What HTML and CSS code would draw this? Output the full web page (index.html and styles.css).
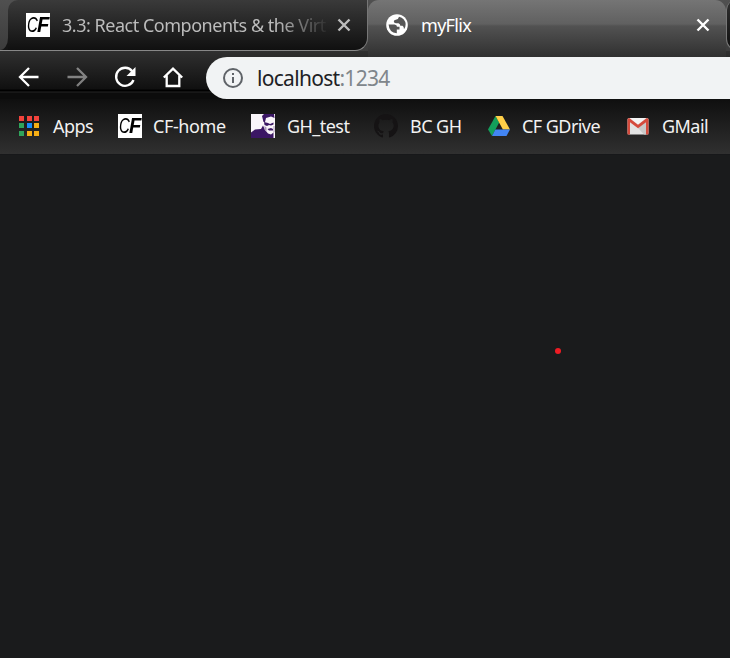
FILE: index.html
```html
<!DOCTYPE html>
<html lang="en">
<head>
<meta charset="utf-8">
<title>myFlix</title>
<link rel="stylesheet" href="styles.css">
</head>
<body>
<header class="browser">
  <div class="tabs">
    <div class="tab tab-prev"></div>
    <div class="tab tab-idle">
      <span class="cf"><i>C</i><b>F</b></span>
      <span class="tab-title faded">3.3: React Components &amp; the Virt</span>
      <svg class="close" viewBox="0 0 14 14"><path d="M1.500 1.500l11 11M12.500 1.500l-11 11"/></svg>
    </div>
    <div class="tab tab-active">
      <svg class="globe" viewBox="0 0 22 22"><circle cx="11" cy="11" r="10.800" fill="#fff"/><path fill="#565656" d="M2.600 10.500H8.500Q11 10.800 11 12.800H13.500V15.500H10.800V19.300Q3.200 18.800 2.600 10.500ZM13 2.800Q12.500 5.600 9.800 5.800Q7.800 6 7.800 7.800Q8 9.200 10 9.300H12.500Q14.300 9.800 14.300 11.800H16.500Q18 12.500 18 15.300Q21.500 10 17.800 5.500Q16 3.300 13 2.800Z"/></svg>
      <span class="tab-title">myFlix</span>
      <svg class="close" viewBox="0 0 14 14"><path d="M1.500 1.500l11 11M12.500 1.500l-11 11"/></svg>
    </div>
    <div class="tab tab-next"></div>
  </div>
  <nav class="toolbar">
    <svg class="nav" viewBox="0 0 24 24"><path d="M21.500 12H3M12 3L3 12l9 9"/></svg>
    <svg class="nav dim" viewBox="0 0 24 24"><path d="M2.500 12H21M12 3l9 9-9 9"/></svg>
    <svg class="nav" viewBox="0 0 24 24"><path d="M19.200 6.200A9 9 0 1 0 20.500 15"/><path class="solid" d="M22.500 2v9h-9z"/></svg>
    <svg class="nav" viewBox="0 0 24 24"><path d="M2.800 12.500L12 3.700l9.200 8.800M5.700 10.500V21h12.600V10.500"/></svg>
    <div class="address">
      <svg class="info" viewBox="0 0 20 20"><circle cx="10" cy="10" r="9"/><path d="M10 9v6M10 5v2"/></svg>
      <span class="url">localhost<span class="port">:1234</span></span>
    </div>
  </nav>
  <nav class="bookmarks">
    <a class="mark m-apps"><span class="apps"><i class="r"></i><i class="r"></i><i class="r"></i><i class="g"></i><i class="b"></i><i class="y"></i><i class="g"></i><i class="y"></i><i class="y"></i></span><span class="label">Apps</span></a>
    <a class="mark m-home"><span class="cf"><i>C</i><b>F</b></span><span class="label">CF-home</span></a>
    <a class="mark m-test"><svg viewBox="0 0 24 24"><path fill="#faf6fa" d="M0 0h24v24H0z"/><path fill="#3b1764" d="M11 2L13 0H23L23.500 4L20 2.500L15 4L14 8H12.500ZM13 8L17 9L19 10L22.500 8.500V10.500L20 11.500L18 11L16 12L13.500 11ZM0 24V18.500L4 15.500L10 15L12 11.500L14 16L17 19.500L20 20.500L22.500 18.500V24ZM16.500 15L20 14L22 15V16.500L18 16.500Z"/><path fill="#a995b7" d="M13.500 12l2 1.500v4.500l-2-2.500zM22.500 12h1v6l-1 1z"/></svg><span class="label">GH_test</span></a>
    <a class="mark m-bc"><svg viewBox="0 0 16 16"><path fill="#151314" d="M8 0C3.580 0 0 3.580 0 8c0 3.540 2.290 6.530 5.470 7.590.4.070.55-.17.55-.38 0-.19-.01-.82-.01-1.490-2.010.37-2.530-.49-2.690-.94-.09-.23-.48-.94-.82-1.130-.28-.15-.68-.52-.01-.53.63-.01 1.080.58 1.230.82.72 1.210 1.870.87 2.330.66.07-.52.28-.87.51-1.070-1.780-.2-3.640-.89-3.640-3.950 0-.87.31-1.590.82-2.150-.08-.2-.36-1.020.08-2.120 0 0 .67-.21 2.200.82.64-.18 1.320-.27 2-.27s1.360.09 2 .27c1.530-1.040 2.200-.82 2.200-.82.44 1.100.16 1.920.08 2.120.51.56.82 1.270.82 2.150 0 3.070-1.870 3.750-3.650 3.950.29.25.54.73.54 1.480 0 1.070-.01 1.930-.01 2.200 0 .21.15.46.55.38A8.010 8.010 0 0 0 16 8c0-4.420-3.580-8-8-8z"/></svg><span class="label">BC GH</span></a>
    <a class="mark m-drive"><svg viewBox="0 0 24 24"><path fill="#139f5b" d="M8.500 2L12.200 8.600L5 22L1 15.500Z"/><path fill="#ffcf48" d="M8.500 2H15.500L23 15.500H15.900Z"/><path fill="#4285f4" d="M8.400 15.500H23L19.500 22H5Z"/></svg><span class="label">CF GDrive</span></a>
    <a class="mark m-mail"><svg viewBox="0 0 24 24"><rect x="1.500" y="4" width="21" height="16.500" rx="1.500" fill="#e3e3e3"/><path fill="#f4f4f4" d="M4 4h16l-8 7z"/><path fill="#c9c9c9" d="M12 14l8-7v13.500h-2z"/><path fill="#d54b3d" d="M1.500 5.500Q1.500 4 3.200 4L12 10.700L20.800 4Q22.500 4 22.500 5.500V20.500H20V8.300L12 14.300L4 8.300V20.500H1.500Z"/></svg><span class="label">GMail</span></a>
  </nav>
</header>
<main class="page"><span class="pointer"></span></main>
</body>
</html>
```
FILE: styles.css
```css
* { box-sizing: border-box; }
body {
  margin: 0;
  width: 730px;
  height: 658px;
  overflow: hidden;
  background: #1b1c1d;
  color: #f2f2f2;
  font: 18px/24px "Noto Sans", "Open Sans", sans-serif;
}
svg { display: block; flex: none; }
.browser { height: 154px; background: #303030; }
.tabs {
  display: flex;
  height: 51px;
  background:
    linear-gradient(#141414, #141414) 0 36px / 18px 14px no-repeat,
    linear-gradient(#888, #888) 0 50px / 18px 1px no-repeat,
    linear-gradient(#505050, #3c3c3c);
}
.tab { display: flex; align-items: center; height: 51px; flex: none; }
.tab-prev {
  width: 8px;
  height: 50px;
  border-radius: 0 0 8px 0 / 0 0 12px 0;
  background: linear-gradient(#505050, #3c3c3c);
}
.tab-idle {
  width: 360px;
  padding: 0 16px 1px 18px;
  border-right: 1.500px solid #777;
  border-bottom: 1.500px solid #888;
  border-radius: 10px 0 13px 0;
  background: linear-gradient(#3a3a3a, #101010);
  color: #bcbcbc;
}
.tab-active {
  width: 358px;
  height: 57px;
  margin-bottom: -6px;
  padding: 0 16px 7px 18px;
  border-radius: 11px 11px 0 0;
  background: linear-gradient(#757575, #606060 24px, #525252 26px, #303030);
  color: #fff;
}
.tab-next {
  width: 20px;
  border-left: 1px solid #777;
  border-bottom: 1px solid #888;
  border-radius: 10px 0 0 12px;
  background: linear-gradient(#303030, #101010);
}
.tab-title { white-space: nowrap; letter-spacing: -.7px; }
.faded {
  width: 264px;
  margin: 0 10px 0 12px;
  overflow: hidden;
  letter-spacing: -.48px;
  -webkit-mask-image: linear-gradient(90deg, #000 215px, transparent 268px);
  mask-image: linear-gradient(90deg, #000 215px, transparent 268px);
}
.close { width: 14px; height: 14px; margin-left: auto; }
.close path { fill: none; stroke: currentColor; stroke-width: 2.4; }
.globe { width: 22px; height: 22px; margin-right: 13px; }
.cf {
  display: flex;
  flex: none;
  width: 24px;
  height: 24px;
  padding-left: 1px;
  background: #fff;
  color: #000;
  font: 22px/24px "Liberation Sans", sans-serif;
}
.cf i { width: 10px; transform: scaleX(.68); transform-origin: left; }
.cf b { font-style: italic; transform: scaleX(.92); transform-origin: left; }
.toolbar {
  display: flex;
  align-items: center;
  height: 48px;
  padding: 6px 0 0 17px;
  background: linear-gradient(#303030, #101010 38px, #000 39px, #000 40px, #242424 41px, #0c0c0c 42px, #0c0c0c);
}
.nav { width: 24px; height: 24px; margin: -2px 24px 0 0; }
.nav path { fill: none; stroke: #fff; stroke-width: 2.3; }
.nav .solid { fill: #fff; stroke: none; }
.dim { opacity: .45; }
.address {
  display: flex;
  align-items: center;
  flex: 1;
  height: 42px;
  margin-left: -3px;
  padding-left: 17px;
  border-radius: 21px 0 0 21px;
  background: #f1f3f4;
}
.info { width: 20px; height: 20px; margin-right: 14px; }
.info circle, .info path { fill: none; stroke: #5f6368; stroke-width: 2; }
.url { color: #202124; font-size: 21px; letter-spacing: -.7px; }
.port { color: #80868b; }
.bookmarks {
  display: flex;
  align-items: center;
  height: 55px;
  background: linear-gradient(#0f0f0f, #303030);
  padding: 0 0 2px 17px;
}
.mark { display: flex; align-items: center; flex: none; white-space: nowrap; }
.mark > svg { width: 24px; height: 24px; }
.label { margin-left: 12px; letter-spacing: -.55px; }
.m-apps { width: 101px; }
.m-home { width: 133px; }
.m-home .label { margin-left: 11px; letter-spacing: -.4px; }
.m-test { width: 123px; }
.m-bc { width: 113px; }
.m-drive { width: 139px; }
.m-drive .label { margin-left: 11px; }
.m-mail { width: 104px; }
.apps { display: grid; grid-template-columns: repeat(3, 5px); grid-auto-rows: 5px; gap: 2.5px; width: 24px; padding-left: 2px; }
.r { background: #f2433c; }
.g { background: #2fa45b; }
.b { background: #168cfb; }
.y { background: #f6ae14; }
.page { height: 504px; padding: 193px 0 0 555px; background: #1a1b1c; border-top: 1px solid #17181a; }
.pointer { display: block; width: 6px; height: 6px; border-radius: 50%; background: #ee1c24; }
```
